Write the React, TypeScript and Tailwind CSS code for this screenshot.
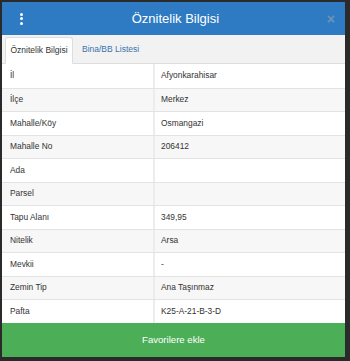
import React from "react";

const rows: [string, string][] = [
  ["İl", "Afyonkarahisar"],
  ["İlçe", "Merkez"],
  ["Mahalle/Köy", "Osmangazi"],
  ["Mahalle No", "206412"],
  ["Ada", ""],
  ["Parsel", ""],
  ["Tapu Alanı", "349,95"],
  ["Nitelik", "Arsa"],
  ["Mevkii", "-"],
  ["Zemin Tip", "Ana Taşınmaz"],
  ["Pafta", "K25-A-21-B-3-D"],
];

export default function App() {
  return (
    <div
      className="w-[350px] h-[361px] bg-[#2a2a2a] pt-[2px] pl-[2px] overflow-hidden"
      style={{ fontFamily: '"Liberation Sans", Arial, sans-serif' }}
    >
      <div className="w-[343px] h-[355px] bg-white flex flex-col">
        {/* header */}
        <div className="h-[33px] bg-[#2e7bc3] flex items-center justify-between pl-[16px] pr-[10px] shrink-0">
          <div className="flex flex-col gap-[1.5px] w-[6px] items-center">
            <span className="w-[3px] h-[3px] rounded-full bg-white" />
            <span className="w-[3px] h-[3px] rounded-full bg-white" />
            <span className="w-[3px] h-[3px] rounded-full bg-white" />
          </div>
          <span className="text-white text-[13px] leading-none">Öznitelik Bilgisi</span>
          <span className="text-[#6f93b8] text-[14px] leading-none font-bold">×</span>
        </div>

        {/* tabs */}
        <div className="h-[29px] bg-[#f2f2f2] flex items-end px-[3px] border-b border-[#dddddd] shrink-0">
          <div className="h-[27px] -mb-px w-[68px] bg-white border border-[#dddddd] border-b-white rounded-t-[3px] flex items-center justify-center text-[8.5px] text-[#333333]">
            Öznitelik Bilgisi
          </div>
          <div className="h-[27px] px-[9px] flex items-center text-[8.5px] text-[#3a72ad]">
            Bina/BB Listesi
          </div>
        </div>

        {/* table */}
        <div className="flex flex-col shrink-0">
          {rows.map(([k, v], i) => (
            <div
              key={k}
              className={`h-[23.5px] grid grid-cols-[153px_1fr] text-[8.4px] text-[#333333] ${
                i > 0 ? "border-t border-[#e3e3e3]" : ""
              } ${i % 2 === 1 ? "bg-[#f7f7f7]" : "bg-white"}`}
            >
              <div className="flex items-center pl-[8px] border-r-2 border-[#ececec]">{k}</div>
              <div className="flex items-center pl-[6px]">{v}</div>
            </div>
          ))}
        </div>

        {/* button */}
        <div className="flex-1 bg-[#4cae57] flex items-center justify-center text-white text-[9.6px]">
          Favorilere ekle
        </div>
      </div>
    </div>
  );
}
